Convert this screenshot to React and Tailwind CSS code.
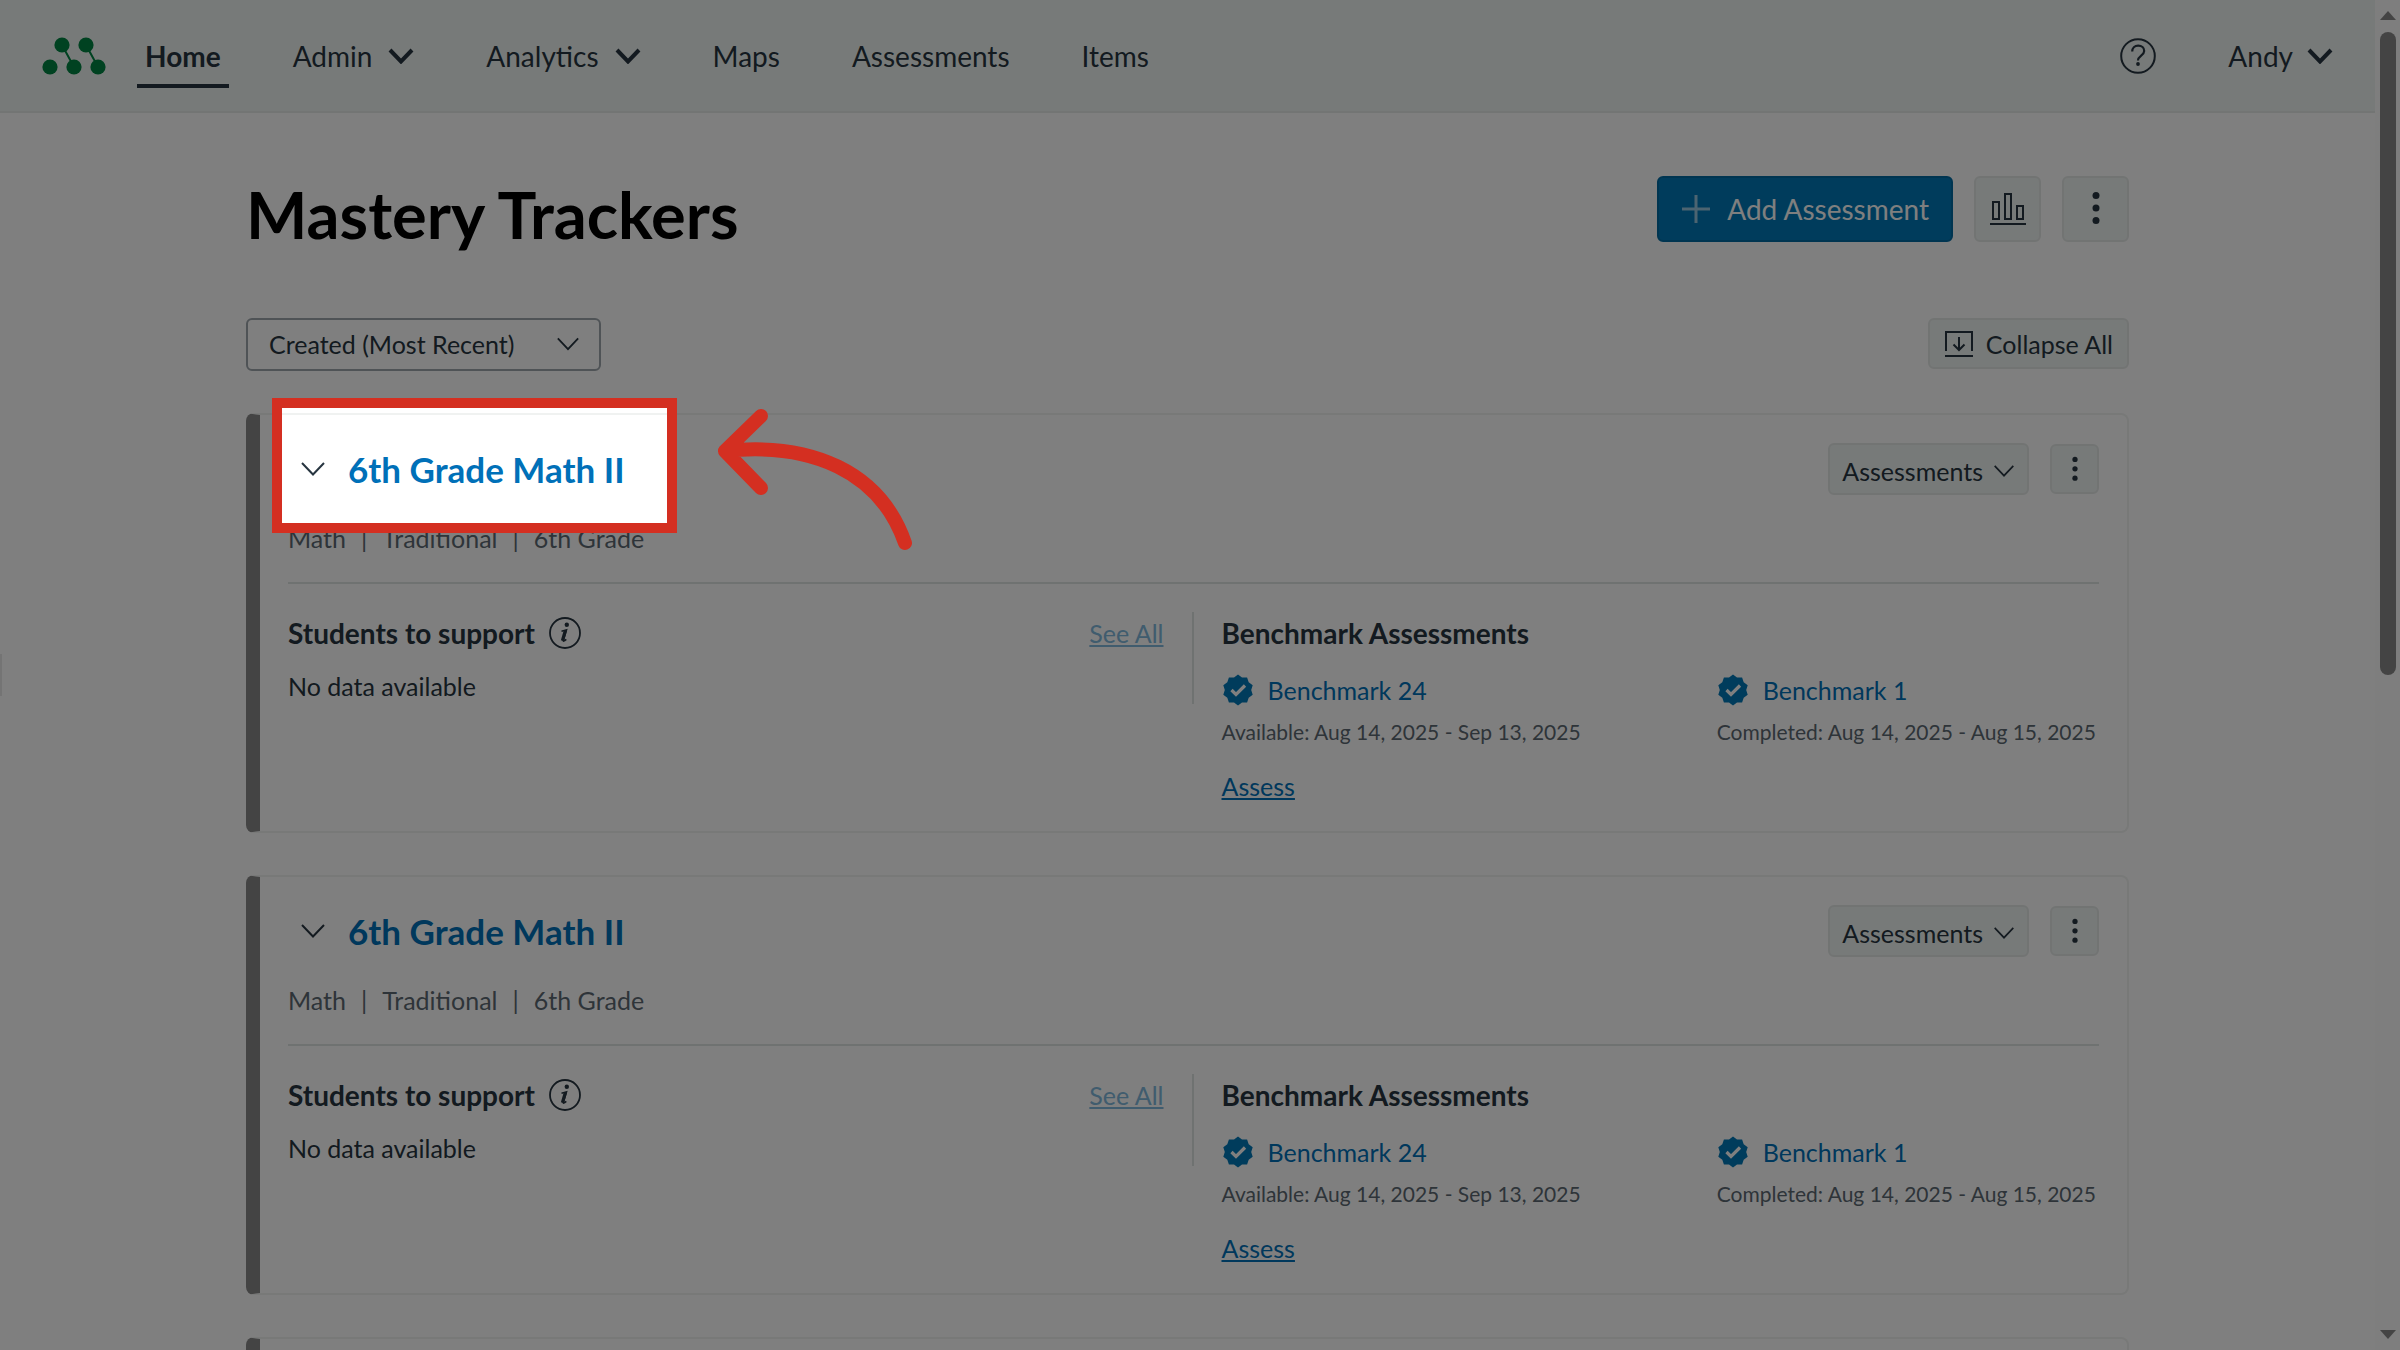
import React, { useState } from 'react';

const Chevron = ({ className, strokeWidth = 2 }) => (
  <svg viewBox="0 0 26 16" fill="none" stroke="currentColor" strokeWidth={strokeWidth} className={className} aria-hidden="true">
    <path d="M2 2l11 11.5L24 2" />
  </svg>
);

const Dots = ({ className }) => (
  <svg viewBox="0 0 8 36" fill="currentColor" className={className} aria-hidden="true">
    <circle cx="4" cy="4.5" r="3.5" />
    <circle cx="4" cy="17" r="3.5" />
    <circle cx="4" cy="29.5" r="3.5" />
  </svg>
);

const Logo = () => (
  <svg viewBox="0 0 64 40" className="w-16 h-10" fill="#008542" stroke="#008542" strokeWidth="2" aria-label="Mastery">
    <path d="M20 9l12 22M44 9l12 22" />
    <g stroke="none">
      <circle cx="20" cy="9" r="7.6" />
      <circle cx="44" cy="9" r="7.6" />
      <circle cx="8" cy="31" r="7.6" />
      <circle cx="32" cy="31" r="7.6" />
      <circle cx="56" cy="31" r="7.6" />
    </g>
  </svg>
);

const HelpIcon = () => (
  <svg viewBox="0 0 36 36" className="w-9 h-9" fill="none" stroke="currentColor" strokeWidth="2" aria-hidden="true">
    <circle cx="18" cy="18" r="16.8" />
    <path d="M12.2 13.5c0-3.6 2.5-5.8 6-5.8s6 2.2 6 5.3c0 4.5-6.2 4.7-6.2 9.5" strokeWidth="2.2" />
    <circle cx="18" cy="26" r="1.9" fill="currentColor" stroke="none" />
  </svg>
);

const InfoIcon = () => (
  <svg viewBox="0 0 32 32" className="w-8 h-8" fill="none" stroke="currentColor" aria-hidden="true">
    <circle cx="16" cy="16" r="15" strokeWidth="1.8" />
    <circle cx="17.8" cy="7.8" r="2.2" fill="currentColor" stroke="none" />
    <path d="M12.5 14.2l5-1.4-3.2 10.5c-.3 1.2.6 1.2 3-.9" strokeWidth="1.6" />
    <path d="M16.4 13.5l-3 10.3" strokeWidth="3.2" />
  </svg>
);

const ChartIcon = () => (
  <svg viewBox="0 0 36 34" className="w-9 h-[34px]" fill="none" stroke="currentColor" strokeWidth="2" aria-hidden="true">
    <path d="M3 10h6v17H3zM15 2h6v25h-6zM27 14h6v13h-6zM0 32h36" />
  </svg>
);

const CollapseIcon = () => (
  <svg viewBox="0 0 30 28" className="w-[30px] h-7" fill="none" stroke="currentColor" strokeWidth="2" aria-hidden="true">
    <path d="M2 21V2h26v19M1 26h28M15 7v12M9.5 14.5L15 20l5.5-5.5" />
  </svg>
);

const BadgeIcon = () => (
  <svg viewBox="-16 -16 32 32" className="w-8 h-8 text-[#0079b8]" aria-hidden="true">
    <path
      fill="currentColor"
      d="M0-15.5L4-12.4L9.1-12.5L10.7-7.7L14.7-4.8L13.2 0L14.7 4.8L10.7 7.7L9.1 12.5L4 12.4L0 15.5L-4 12.4L-9.1 12.5L-10.7 7.7L-14.7 4.8L-13.2 0L-14.7-4.8L-10.7-7.7L-9.1-12.5L-4-12.4z"
    />
    <path d="M-6.5 0l4.5 4.5L7-4.5" fill="none" stroke="#fff" strokeWidth="3.2" />
  </svg>
);

const navItems = [
  { label: 'Home', active: true },
  { label: 'Admin', menu: true },
  { label: 'Analytics', menu: true },
  { label: 'Maps' },
  { label: 'Assessments' },
  { label: 'Items' },
];

const trackers = [
  { id: 1, title: '6th Grade Math II', highlighted: true },
  { id: 2, title: '6th Grade Math II' },
];

const benchmarks = [
  { name: 'Benchmark 24', dates: 'Available: Aug 14, 2025 - Sep 13, 2025', open: true },
  { name: 'Benchmark 1', dates: 'Completed: Aug 14, 2025 - Aug 15, 2025' },
];

const cardClass = 'relative bg-white border-2 border-l-14 border-[#f0f2f1] border-l-[#888] rounded-lg';

const Header = () => (
  <header className="h-[113px] flex items-center justify-between px-[42px] bg-[#eff4f2] border-b-2 border-[#e6ebe9] text-[28px] leading-8">
    <div className="flex items-center gap-[31px]">
      <Logo />
      <nav className="flex items-center gap-14">
        {navItems.map((item) => (
          <a
            key={item.label}
            href="#"
            className={`h-16 px-2 flex items-center gap-4 border-y-4 border-t-transparent ${item.active ? 'font-bold border-b-[#273540]' : 'border-b-transparent'}`}
          >
            {item.label}
            {item.menu && <Chevron className="w-[26px] h-4" strokeWidth={4} />}
          </a>
        ))}
      </nav>
    </div>
    <div className="flex items-center gap-[72px]">
      <button type="button" aria-label="Help"><HelpIcon /></button>
      <button type="button" className="flex items-center gap-3.5">
        Andy
        <Chevron className="w-[26px] h-4" strokeWidth={4} />
      </button>
    </div>
  </header>
);

// Red frame that dims the rest of the page, with the arrow pointing at it
const Spotlight = () => (
  <>
    <div className="absolute z-10 left-3 -top-[17px] w-[405px] h-[135px] border-10 border-[#d42f21] pointer-events-none shadow-[0_0_0_2400px_rgba(0,0,0,0.5)]" />
    <svg
      viewBox="0 0 200 152"
      className="absolute z-20 left-[456px] -top-3 w-[200px] h-[152px] pointer-events-none"
      fill="none"
      stroke="#d42f21"
      strokeWidth="14"
      strokeLinecap="round"
      strokeLinejoin="round"
      aria-hidden="true"
    >
      <path d="M45 13L9 48l36 37M9 48c86-9 155 20 180 92" />
    </svg>
  </>
);

const TrackerCard = ({ tracker }) => {
  const [open, setOpen] = useState(true);

  return (
    <section className={`${cardClass} px-7 pt-7 pb-[29px]`}>
      {tracker.highlighted && <Spotlight />}
      <div className="h-[52px] flex items-center justify-between">
        <div className="flex items-center gap-[22px] pl-3">
          <button type="button" aria-label="Toggle tracker" onClick={() => setOpen(!open)}>
            <Chevron className="w-[26px] h-4" />
          </button>
          <h2>
            <a href="#" className="text-[35px] leading-[44px] font-bold text-[#0070b8]">{tracker.title}</a>
          </h2>
        </div>
        <div className="flex items-center gap-[21px]">
          <button type="button" className="h-[52px] px-3 pt-1 flex items-center gap-2.5 rounded-md border-2 border-[#e4e8e7] bg-[#eff4f2]">
            Assessments
            <Chevron className="w-[22px] h-4" />
          </button>
          <button type="button" aria-label="Tracker options" className="w-[49px] h-[50px] flex items-center justify-center rounded-md border-2 border-[#e4e8e7] bg-[#eff4f2]">
            <Dots className="w-1.5 h-[27px]" />
          </button>
        </div>
      </div>

      <p className="mt-[27px] flex gap-[15px] text-[#5c6972]">
        <span>Math</span>
        <span>|</span>
        <span>Traditional</span>
        <span>|</span>
        <span>6th Grade</span>
      </p>

      {open && (
        <div className="mt-7 pt-7 border-t-2 border-[#dfe4e2] flex">
          <div className="flex-1">
            <div className="h-[42px] flex items-center justify-between pr-7">
              <h3 className="flex items-center gap-3.5 text-[28px] font-bold">
                Students to support
                <button type="button" aria-label="About students to support"><InfoIcon /></button>
              </h3>
              <a href="#" className="underline text-[#80b8dc]">See All</a>
            </div>
            <p className="mt-4">No data available</p>
          </div>
          <div className="w-0.5 h-[92px] bg-[#dfe4e2]" />
          <div className="w-1/2 pl-7">
            <h3 className="leading-[42px] text-[28px] font-bold">Benchmark Assessments</h3>
            <div className="mt-5 grid grid-cols-[57fr_44fr]">
              {benchmarks.map((benchmark) => (
                <div key={benchmark.name}>
                  <a href="#" className="w-fit flex items-center gap-3.5 text-[#0070b8]">
                    <BadgeIcon />
                    {benchmark.name}
                  </a>
                  <p className="mt-3 text-[21px] leading-7 text-[#5c6972]">{benchmark.dates}</p>
                  {benchmark.open && <a href="#" className="mt-6 block w-fit underline text-[#0070b8]">Assess</a>}
                </div>
              ))}
            </div>
          </div>
        </div>
      )}
    </section>
  );
};

// Classic 25px scrollbar beside the page
const ScrollBar = () => (
  <div className="w-[25px] flex flex-col items-center py-[11px] bg-[#fcfcfc] text-[#888]" aria-hidden="true">
    <svg viewBox="0 0 16 9" className="w-4 h-[9px]" fill="currentColor"><path d="M8 0l8 9H0z" /></svg>
    <div className="flex-1 w-full flex flex-col items-center py-3">
      <div className="w-4 h-1/2 rounded-full bg-[#888]" />
    </div>
    <svg viewBox="0 0 16 9" className="w-4 h-[9px]" fill="currentColor"><path d="M8 9L0 0h16z" /></svg>
  </div>
);

const App = () => {
  const [sort, setSort] = useState('recent');

  return (
    <div className="h-screen flex overflow-hidden bg-white font-['Lato',sans-serif] text-[25px] leading-8 text-[#273540]">
      {/* Edge of the closed side drawer */}
      <div className="absolute left-0 top-[654px] w-0.5 h-[42px] bg-[#e8e8e8]" />
      <div className="flex-1 min-w-0">
        <Header />
        <main className="w-full max-w-[1883px] mx-auto pt-[63px]">
          <div className="flex items-start justify-between">
            <h1 className="text-[65px] leading-[76px] font-bold text-black">Mastery Trackers</h1>
            <div className="flex gap-[21px] text-[28px]">
              <button type="button" className="h-[66px] px-[22px] flex items-center gap-4 rounded-md bg-[#0079b8] border-2 border-[#006ba3] text-white">
                <svg viewBox="0 0 30 30" className="w-[30px] h-[30px] opacity-60" stroke="currentColor" strokeWidth="3" aria-hidden="true">
                  <path d="M15 1v28M1 15h28" />
                </svg>
                Add Assessment
              </button>
              <button type="button" aria-label="Reports" className="w-[67px] h-[66px] flex items-center justify-center rounded-md border-2 border-[#e4e8e7] bg-[#eff4f2]">
                <ChartIcon />
              </button>
              <button type="button" aria-label="More options" className="w-[67px] h-[66px] flex items-center justify-center rounded-md border-2 border-[#e4e8e7] bg-[#eff4f2]">
                <Dots className="w-2 h-9" />
              </button>
            </div>
          </div>

          <div className="mt-[66px] flex items-start justify-between">
            <div className="relative w-[355px]">
              <select
                aria-label="Sort trackers"
                value={sort}
                onChange={(e) => setSort(e.target.value)}
                className="w-full h-[53px] pl-[21px] pb-0.5 appearance-none rounded-md border-2 border-[#9ea6ad]"
              >
                <option value="recent">Created (Most Recent)</option>
                <option value="oldest">Created (Oldest)</option>
              </select>
              <Chevron className="absolute right-[21px] top-[18px] w-6 h-4 pointer-events-none" />
            </div>
            <button type="button" className="h-[51px] px-3.5 flex items-center gap-3 rounded-md border-2 border-[#e4e8e7] bg-[#eff4f2]">
              <CollapseIcon />
              Collapse All
            </button>
          </div>

          <div className="mt-[42px] flex flex-col gap-[42px]">
            {trackers.map((tracker) => (
              <TrackerCard key={tracker.id} tracker={tracker} />
            ))}
            <section className={`${cardClass} h-[420px]`} />
          </div>
        </main>
      </div>
      <ScrollBar />
    </div>
  );
};

export default App;
